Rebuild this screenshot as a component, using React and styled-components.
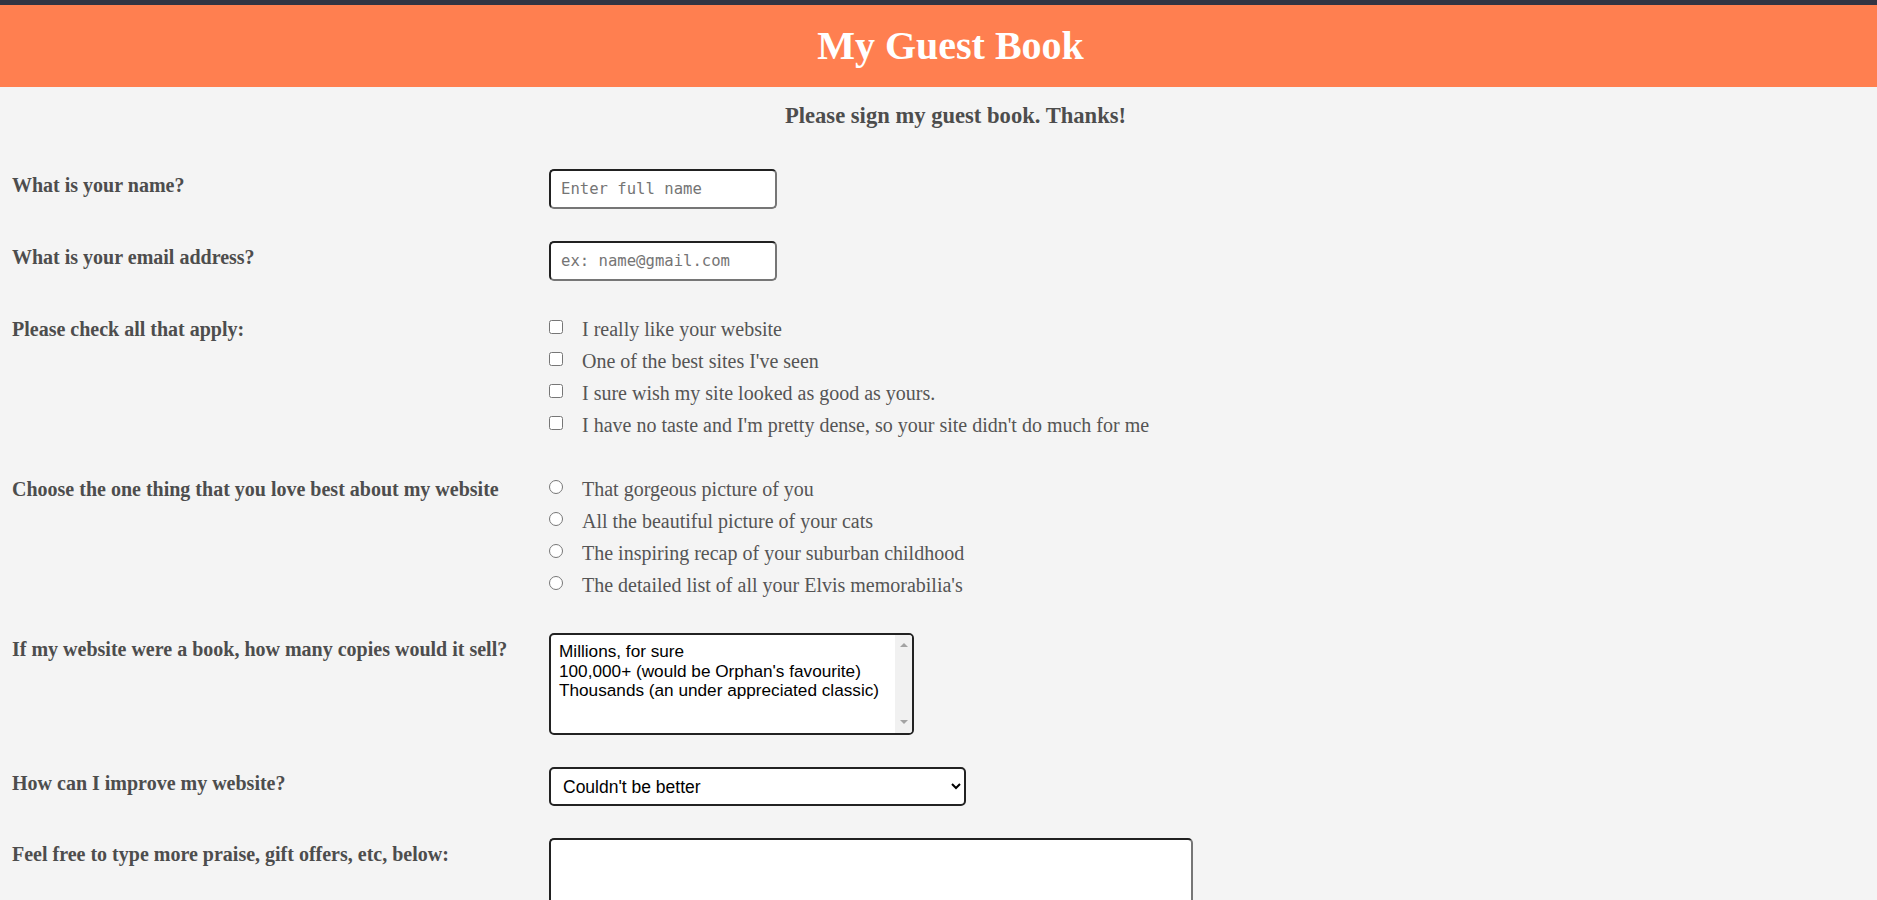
import React from "react";
import styled, { createGlobalStyle } from "styled-components";

const GlobalStyle = createGlobalStyle`
  html, body {
    margin: 0;
    padding: 0;
    background: #f4f4f4;
    font-family: "Liberation Serif", "Times New Roman", serif;
  }
`;

const checks = [
  "I really like your website",
  "One of the best sites I've seen",
  "I sure wish my site looked as good as yours.",
  "I have no taste and I'm pretty dense, so your site didn't do much for me",
];

const radios = [
  "That gorgeous picture of you",
  "All the beautiful picture of your cats",
  "The inspiring recap of your suburban childhood",
  "The detailed list of all your Elvis memorabilia's",
];

const sales = [
  "Millions, for sure",
  "100,000+ (would be Orphan's favourite)",
  "Thousands (an under appreciated classic)",
];

export default function App() {
  return (
    <Page>
      <GlobalStyle />
      <Header>
        <Title>My Guest Book</Title>
      </Header>
      <Subtitle>Please sign my guest book. Thanks!</Subtitle>

      <Form onSubmit={(e) => e.preventDefault()}>
        <Row>
          <Label htmlFor="name">What is your name?</Label>
          <TextInput id="name" type="text" placeholder="Enter full name" />
        </Row>
        <Row>
          <Label htmlFor="email">What is your email address?</Label>
          <TextInput id="email" type="email" placeholder="ex: name@gmail.com" />
        </Row>
        <Row>
          <Label as="span">Please check all that apply:</Label>
          <Options>
            {checks.map((c, i) => (
              <Option key={i}>
                <Tick type="checkbox" />
                {c}
              </Option>
            ))}
          </Options>
        </Row>
        <Row>
          <Label as="span">Choose the one thing that you love best about my website</Label>
          <Options>
            {radios.map((r, i) => (
              <Option key={i}>
                <Tick type="radio" name="best" />
                {r}
              </Option>
            ))}
          </Options>
        </Row>
        <Row>
          <Label as="span">If my website were a book, how many copies would it sell?</Label>
          <ListBox role="listbox" aria-multiselectable="true" tabIndex={0}>
            <ListItems>
              {sales.map((s) => (
                <ListItem key={s} role="option">{s}</ListItem>
              ))}
            </ListItems>
            <ScrollGutter aria-hidden="true">
              <Arrow $dir="up" />
              <Arrow $dir="down" />
            </ScrollGutter>
          </ListBox>
        </Row>
        <Row>
          <Label htmlFor="improve">How can I improve my website?</Label>
          <Dropdown id="improve" defaultValue="better">
            <option value="better">Couldn't be better</option>
            <option value="cats">More pictures of cats</option>
            <option value="elvis">More Elvis memorabilia</option>
          </Dropdown>
        </Row>
        <Row>
          <Label htmlFor="more">Feel free to type more praise, gift offers, etc, below:</Label>
          <Comments id="more" />
        </Row>
      </Form>
    </Page>
  );
}

const Page = styled.div`
  min-height: 100vh;
  background: #f4f4f4;
`;

const Header = styled.header`
  height: 82px;
  border-top: 5px solid #313443;
  background: #ff7f50;
  display: flex;
  align-items: center;
  justify-content: center;
  padding-left: 24px;
`;

const Title = styled.h1`
  margin: 0;
  color: #ffffff;
  font-size: 40px;
  font-weight: bold;
  line-height: 44px;
`;

const Subtitle = styled.h3`
  margin: 16px 0 0;
  padding-left: 34px;
  text-align: center;
  color: #4d4d4d;
  font-size: 22.6px;
  line-height: 25px;
  font-weight: bold;
`;

const Form = styled.form`
  display: flex;
  flex-direction: column;
  gap: 32px;
  padding: 41px 12px 40px;
`;

const Row = styled.div`
  display: grid;
  grid-template-columns: 537px auto;
  align-items: start;
  justify-items: start;
`;

const Label = styled.label`
  padding-top: 5px;
  color: #4d4d4d;
  font-size: 20px;
  line-height: 23px;
  font-weight: bold;
`;

const TextInput = styled.input`
  box-sizing: border-box;
  width: 228px;
  height: 40px;
  padding: 0 10px;
  border: 2px inset #767676;
  border-radius: 5px;
  background: #fff;
  font-family: "DejaVu Sans Mono", "Liberation Mono", monospace;
  font-size: 15.6px;
  &::placeholder {
    color: #757575;
  }
`;

const Options = styled.div`
  display: flex;
  flex-direction: column;
`;

const Option = styled.label`
  display: flex;
  align-items: center;
  height: 32px;
  color: #555555;
  font-size: 20px;
`;

const Tick = styled.input`
  width: 14px;
  height: 14px;
  margin: 0 19px 4px 0;
`;

const ListBox = styled.div`
  box-sizing: border-box;
  display: flex;
  width: 365px;
  height: 102px;
  border: 2px solid #222;
  border-radius: 5px;
  background: #fff;
  overflow: hidden;
  outline: none;
`;

const ListItems = styled.div`
  flex: 1;
  padding: 7px 0 7px 8px;
  color: #000;
  font-family: "Liberation Sans", Arial, sans-serif;
  font-size: 17.2px;
  line-height: 19.5px;
`;

const ListItem = styled.div`
  white-space: nowrap;
  cursor: default;
`;

const ScrollGutter = styled.div`
  width: 17px;
  background: #f1f1f1;
  display: flex;
  flex-direction: column;
  align-items: center;
  justify-content: space-between;
  padding: 8px 0 9px;
`;

const Arrow = styled.span`
  width: 0;
  height: 0;
  border-left: 4px solid transparent;
  border-right: 4px solid transparent;
  ${(p) =>
    p.$dir === "up"
      ? "border-bottom: 4px solid #a3a3a3;"
      : "border-top: 4px solid #a3a3a3;"}
`;

const Dropdown = styled.select`
  box-sizing: border-box;
  width: 417px;
  height: 39px;
  padding: 0 8px 0 8px;
  border: 2px solid #222;
  border-radius: 5px;
  background: #fff;
  color: #000;
  font-family: "Liberation Sans", Arial, sans-serif;
  font-size: 17.5px;
`;

const Comments = styled.textarea`
  box-sizing: border-box;
  width: 644px;
  height: 150px;
  border: 2px inset #767676;
  border-radius: 5px;
  background: #fff;
  resize: vertical;
  font-family: "Liberation Sans", Arial, sans-serif;
  font-size: 16px;
`;
